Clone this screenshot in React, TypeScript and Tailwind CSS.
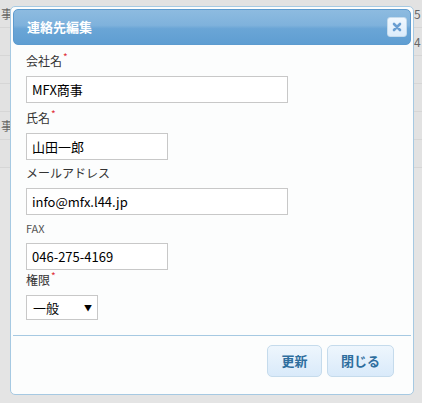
import React from 'react';

const FONT = { fontFamily: '"Noto Sans CJK JP", "Noto Sans", sans-serif' };

type Field = {
  label: string;
  value: string;
  required?: boolean;
  width: string;
  gap: string;
  small?: boolean;
};

const FIELDS: Field[] = [
  { label: '会社名', value: 'MFX商事', required: true, width: 'w-[262px]', gap: 'mt-[8px]' },
  { label: '氏名', value: '山田一郎', required: true, width: 'w-[142px]', gap: 'mt-[7px]' },
  { label: 'メールアドレス', value: 'info@mfx.l44.jp', width: 'w-[262px]', gap: 'mt-[5px]' },
  { label: 'FAX', value: '046-275-4169', width: 'w-[142px]', gap: 'mt-[5px]', small: true },
];

// 背景の一覧表（ダイアログの下に見えている部分）
const ROWS = [
  { left: '事', right: '5' },
  { left: '', right: '4' },
  { left: '', right: '' },
  { left: '', right: '' },
  { left: '事', right: '' },
  { left: '', right: '' },
];

function Label({ text, required, small }: { text: string; required?: boolean; small?: boolean }) {
  return (
    <div
      className={`flex h-[16px] items-center leading-[16px] ${
        small ? 'text-[11px] text-[#555]' : 'text-[12px] text-[#333]'
      }`}
    >
      <span>{text}</span>
      {required && (
        <span className="-mt-[8px] ml-[1px] text-[10px] leading-none text-[#e0303a]">*</span>
      )}
    </div>
  );
}

export default function App(): React.ReactElement {
  return (
    <div className="relative h-[403px] w-[422px] overflow-hidden bg-[#e4e4e4]" style={FONT}>
      {/* 背景のテーブル */}
      <div className="flex flex-col">
        {ROWS.map((r, i) => (
          <div
            key={i}
            className="flex h-[28px] items-center justify-between border-b border-[#d6d6d6] bg-[#e2e2e2] text-[12px] text-[#666]"
          >
            <span className="w-[10px] pl-[1px]">{r.left}</span>
            <span className="w-[8px]">{r.right}</span>
          </div>
        ))}
      </div>

      {/* ダイアログ */}
      <div className="absolute left-[10px] top-[6px] flex h-[389px] w-[404px] flex-col rounded-[5px] border border-[#a6c9e2] bg-[#fcfdfd] p-[2px]">
        <div className="flex h-[36px] items-center justify-between rounded-[5px] border border-[#5d9bcf] bg-[linear-gradient(to_bottom,#8dbbe0_0%,#7fb2dc_45%,#6aa5d6_55%,#5f9ed2_100%)] pl-[13px] pr-[3px]">
          <span className="text-[13px] font-bold text-white">連絡先編集</span>
          <button className="flex h-[20px] w-[20px] items-center justify-center rounded-[3px] border border-[#c5dbec] bg-[linear-gradient(to_bottom,#f1f8fe,#dcecfb)]">
            <svg width="10" height="10" viewBox="0 0 10 10">
              <path d="M2 2 L8 8 M8 2 L2 8" stroke="#6a9fd2" strokeWidth="2.6" strokeLinecap="round" />
            </svg>
          </button>
        </div>

        <div className="flex flex-col px-[13px]">
          {FIELDS.map((f) => (
            <div key={f.label} className={`flex flex-col ${f.gap}`}>
              <Label text={f.label} required={f.required} small={f.small} />
              <input
                readOnly
                value={f.value}
                className={`mt-[7px] h-[27px] ${f.width} border border-[#c8c8c8] bg-white px-[5px] text-[13px] text-black outline-none`}
                style={FONT}
              />
            </div>
          ))}
          <div className="mt-[2px] flex flex-col">
            <Label text="権限" required />
            <div className="mt-[7px] flex h-[25px] w-[72px] items-center justify-between border border-[#c8c8c8] bg-white pl-[6px] pr-[5px] text-[13px] text-black">
              <span>一般</span>
              <span className="text-[8px] leading-none">▼</span>
            </div>
          </div>
        </div>

        <div className="mt-[15px] flex justify-end gap-[5px] border-t border-[#a6c9e2] pr-[17px] pt-[9px]">
          <button className="h-[32px] w-[55px] rounded-[5px] border border-[#c5dbec] bg-[linear-gradient(to_bottom,#eef6fd,#d9eafa)] text-[13px] font-bold text-[#2e6e9e]">
            更新
          </button>
          <button className="h-[32px] w-[67px] rounded-[5px] border border-[#c5dbec] bg-[linear-gradient(to_bottom,#eef6fd,#d9eafa)] text-[13px] font-bold text-[#2e6e9e]">
            閉じる
          </button>
        </div>
      </div>
    </div>
  );
}
